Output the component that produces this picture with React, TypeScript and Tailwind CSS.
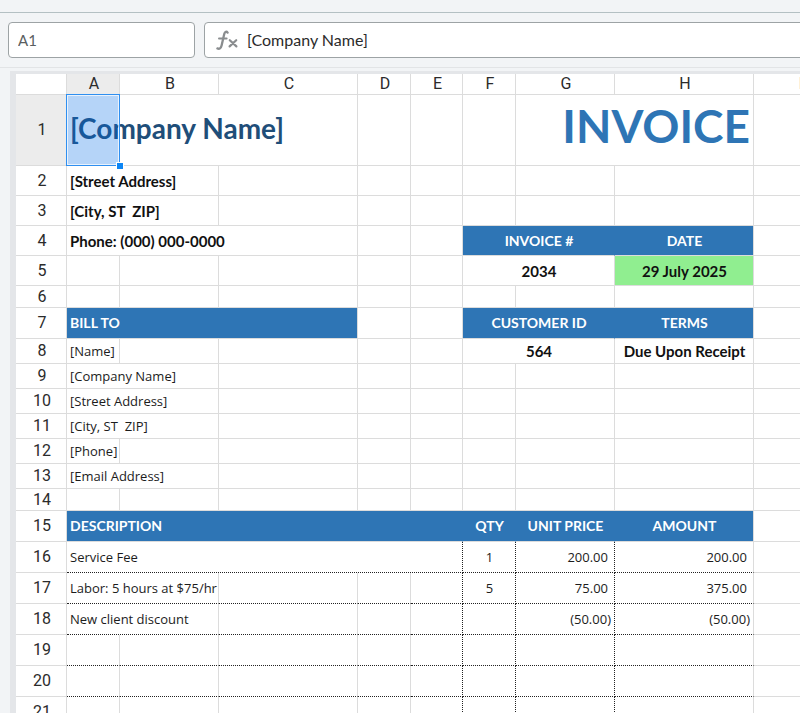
import { useState, type ReactNode } from 'react'
import { clsx } from 'clsx'

type Tone = 'header' | 'bold' | 'date' | 'plain' | 'company' | 'title'

type Cell = {
  text?: string
  span?: number
  tone?: Tone
  align?: 'left' | 'center' | 'right'
  // accounting format leaves room for the closing bracket on positive amounts
  amount?: boolean
}

type Row = { height: string; lined?: boolean; cells: Cell[] }

const COLUMNS = ['A', 'B', 'C', 'D', 'E', 'F', 'G', 'H', 'I']

const H_TITLE = 'h-[71px]'
const H_INFO = 'h-[30px]'
const H_GAP = 'h-[22px]'
const H_BAR = 'h-[31px]'
const H_TEXT = 'h-[25px]'

const blank = (n: number): Cell[] => Array.from({ length: n }, () => ({}))

const ROWS: Row[] = [
  {
    height: H_TITLE,
    cells: [
      { text: '[Company Name]', span: 3, tone: 'company' },
      ...blank(3),
      { text: 'INVOICE', span: 2, tone: 'title', align: 'right' },
      {},
    ],
  },
  { height: H_INFO, cells: [{ text: '[Street Address]', span: 2, tone: 'bold' }, ...blank(7)] },
  { height: H_INFO, cells: [{ text: '[City, ST  ZIP]', span: 2, tone: 'bold' }, ...blank(7)] },
  {
    height: H_INFO,
    cells: [
      { text: 'Phone: (000) 000-0000', span: 3, tone: 'bold' },
      ...blank(2),
      { text: 'INVOICE #', span: 2, tone: 'header', align: 'center' },
      { text: 'DATE', tone: 'header', align: 'center' },
      {},
    ],
  },
  {
    height: H_INFO,
    cells: [
      ...blank(5),
      { text: '2034', span: 2, tone: 'bold', align: 'center' },
      { text: '29 July 2025', tone: 'date', align: 'center' },
      {},
    ],
  },
  { height: H_GAP, cells: blank(9) },
  {
    height: H_BAR,
    cells: [
      { text: 'BILL TO', span: 3, tone: 'header' },
      ...blank(2),
      { text: 'CUSTOMER ID', span: 2, tone: 'header', align: 'center' },
      { text: 'TERMS', tone: 'header', align: 'center' },
      {},
    ],
  },
  {
    height: H_TEXT,
    cells: [
      { text: '[Name]' },
      ...blank(4),
      { text: '564', span: 2, tone: 'bold', align: 'center' },
      { text: 'Due Upon Receipt', tone: 'bold', align: 'center' },
      {},
    ],
  },
  { height: H_TEXT, cells: [{ text: '[Company Name]', span: 2 }, ...blank(7)] },
  { height: H_TEXT, cells: [{ text: '[Street Address]', span: 2 }, ...blank(7)] },
  { height: H_TEXT, cells: [{ text: '[City, ST  ZIP]', span: 2 }, ...blank(7)] },
  { height: H_TEXT, cells: [{ text: '[Phone]' }, ...blank(8)] },
  { height: H_TEXT, cells: [{ text: '[Email Address]', span: 2 }, ...blank(7)] },
  { height: H_GAP, cells: blank(9) },
  {
    height: H_BAR,
    cells: [
      { text: 'DESCRIPTION', span: 5, tone: 'header' },
      { text: 'QTY', tone: 'header', align: 'center' },
      { text: 'UNIT PRICE', tone: 'header', align: 'center' },
      { text: 'AMOUNT', tone: 'header', align: 'center' },
      {},
    ],
  },
  {
    height: H_BAR,
    lined: true,
    cells: [
      { text: 'Service Fee', span: 5 },
      { text: '1', align: 'center' },
      { text: '200.00', align: 'right', amount: true },
      { text: '200.00', align: 'right', amount: true },
      {},
    ],
  },
  {
    height: H_BAR,
    lined: true,
    cells: [
      { text: 'Labor: 5 hours at $75/hr', span: 2 },
      ...blank(3),
      { text: '5', align: 'center' },
      { text: '75.00', align: 'right', amount: true },
      { text: '375.00', align: 'right', amount: true },
      {},
    ],
  },
  {
    height: H_BAR,
    lined: true,
    cells: [
      { text: 'New client discount', span: 2 },
      ...blank(4),
      { text: '(50.00)', align: 'right' },
      { text: '(50.00)', align: 'right' },
      {},
    ],
  },
  { height: H_BAR, lined: true, cells: blank(9) },
  { height: H_BAR, lined: true, cells: blank(9) },
  { height: H_BAR, lined: true, cells: blank(9) },
]

const TONES: Record<Tone, string> = {
  plain: "font-['Open_Sans',sans-serif] text-[13px] text-[#1c1c1c]",
  bold: 'text-[15px] font-bold text-[#111111]',
  header: 'bg-[#2e75b5] text-[14px] font-bold text-white',
  date: 'bg-[#90ee90] text-[15px] font-bold text-[#111111]',
  company: 'pb-1 text-[28px] font-bold text-[#1f4e79]',
  title: 'pb-2 text-[46px] font-bold text-[#2e75b5]',
}

export default function App() {
  return (
    <div className="flex h-screen flex-col overflow-hidden bg-[#f2f4f6] font-['Lato',sans-serif]">
      <div className="h-3 shrink-0" />
      <FormulaBar />
      <main className="ml-2.5 mt-[3px] min-h-0 flex-1 overflow-hidden border-l-6 border-t-3 border-[#e4e6e9]">
        <Sheet />
      </main>
    </div>
  )
}

function FormulaBar() {
  const [cell, setCell] = useState('A1')
  const [formula, setFormula] = useState('[Company Name]')

  return (
    <div className="flex shrink-0 gap-[9px] border-b border-t border-b-[#e2e4e6] border-t-[#b4c0c3] pb-[9px] pl-2 pt-[9px]">
      <input
        aria-label="Name box"
        value={cell}
        onChange={(e) => setCell(e.target.value)}
        className="h-9 w-[187px] rounded border border-[#9da3a5] bg-white px-[9px] text-[15px] text-[#5a5e60] outline-none"
      />
      <label className="-mr-2 flex h-9 min-w-0 flex-1 items-center rounded border border-[#9da3a5] bg-white pl-[11px]">
        <FxIcon />
        <input
          aria-label="Formula"
          value={formula}
          onChange={(e) => setFormula(e.target.value)}
          className="ml-2 min-w-0 flex-1 bg-transparent text-[16px] text-[#2b2b2b] outline-none"
        />
      </label>
    </div>
  )
}

function FxIcon() {
  return (
    <svg width="23" height="22" viewBox="0 0 23 22" fill="none" stroke="#8a8d8f" strokeLinecap="round">
      <path d="M11.6 3.6C10.6 2.2 8.9 2.6 8.3 4.8L5.6 16.6C5 19.2 3.4 20.4 1.4 19.4" strokeWidth="2.3" />
      <path d="M3 9.6H10.6" strokeWidth="2" />
      <path d="M13.8 11.2L20.4 17.4M20.2 11.2L13.6 17.4" strokeWidth="2.2" />
    </svg>
  )
}

function Sheet() {
  return (
    <table className="w-full min-w-[831px] table-fixed border-separate border-spacing-0 bg-white">
      <colgroup>
        <col className="w-[51px]" />
        <col className="w-[53px]" />
        <col className="w-[99px]" />
        <col className="w-[139px]" />
        <col className="w-[53px]" />
        <col className="w-[52px]" />
        <col className="w-[53px]" />
        <col className="w-[99px]" />
        <col className="w-[139px]" />
        <col />
      </colgroup>
      <thead>
        <tr>
          <HeadCell />
          {COLUMNS.map((c) => (
            <HeadCell key={c} active={c === 'A'}>
              {c}
            </HeadCell>
          ))}
        </tr>
      </thead>
      <tbody>
        {ROWS.map((row, i) => (
          <tr key={i}>
            <th
              className={clsx(
                "border-b border-r border-[#dcdcdc] py-0 pl-0.5 pr-0 text-center font-['Roboto',sans-serif] text-[16px] font-normal leading-5 text-[#2b2b2b]",
                row.height,
                i === 0 && 'bg-[#ececec]',
              )}
            >
              {i + 1}
            </th>
            <BodyCells row={row} />
          </tr>
        ))}
      </tbody>
    </table>
  )
}

function HeadCell({ active, children }: { active?: boolean; children?: ReactNode }) {
  return (
    <th
      className={clsx(
        "h-[21px] border-b border-r border-[#dcdcdc] py-0 pl-0.5 pr-0 text-center font-['Roboto',sans-serif] text-[16px] font-normal leading-5 text-[#2b2b2b]",
        active && 'bg-[#ececec]',
      )}
    >
      {children}
    </th>
  )
}

function BodyCells({ row }: { row: Row }) {
  let col = 0
  return row.cells.map((cell, i) => {
    col += cell.span ?? 1
    const tone = cell.tone ?? 'plain'
    const next = row.cells[i + 1]
    return (
      <td
        key={i}
        colSpan={cell.span}
        className={clsx(
          'relative whitespace-pre border-b border-r pl-[3px] pt-0 leading-5',
          TONES[tone],
          cell.align === 'center' && 'pr-0.5 text-center',
          cell.align === 'right' && 'text-right',
          cell.align === 'right' && (cell.amount ? 'pr-1.5' : 'pr-[3px]'),
          row.lined && col < 9 ? 'border-b-[#222222] [border-bottom-style:dotted]' : 'border-b-[#dcdcdc]',
          row.lined && col > 4 && col < 8
            ? 'border-r-[#222222] [border-right-style:dotted]'
            : tone === 'header' && next?.tone === 'header'
              ? 'border-r-[#2e75b5]'
              : 'border-r-[#dcdcdc]',
        )}
      >
        {cell.text}
        {tone === 'company' && <Selection />}
      </td>
    )
  })
}

function Selection() {
  return (
    <div className="pointer-events-none absolute -left-px -top-px h-[72px] w-[54px] border border-[#2f8ff0] bg-[#0b6fe8]/30 ring-1 ring-inset ring-white/70">
      <div className="absolute -bottom-[5px] -right-[5px] box-content h-1.5 w-1.5 border border-white bg-[#0d86f5]" />
    </div>
  )
}
